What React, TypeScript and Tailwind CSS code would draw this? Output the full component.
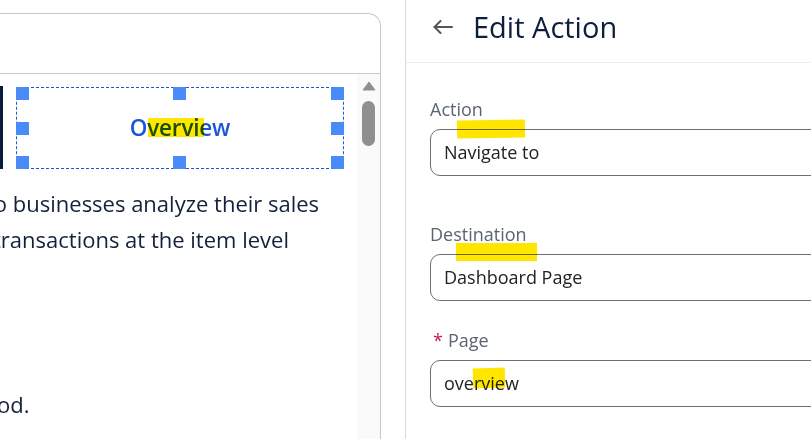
import React from "react";

const font = { fontFamily: '"Open Sans", "Noto Sans", sans-serif' };

const Handle = ({ className }: { className: string }) => (
  <span className={`absolute w-[13px] h-[13px] bg-[#4a8cf7] ${className}`} />
);

const Field = ({
  label,
  value,
  required,
  className,
}: {
  label: string;
  value: string;
  required?: boolean;
  className?: string;
}) => (
  <div className={className}>
    <div className="h-[24px] leading-[24px] text-[18px] text-[#5b6472] flex items-center">
      {required && <span className="text-[#c2185b] mr-[5px] ml-[3px] text-[18px]">*</span>}
      {label}
    </div>
    <div className="mt-[8px] w-[420px] h-[47px] border border-[#707070] rounded-[10px] flex items-center pl-[13px] text-[18px] text-[#222]">
      {value}
    </div>
  </div>
);

const App = () => {
  return (
    <div className="w-[811px] h-[439px] bg-white flex overflow-hidden relative" style={font}>
      {/* left canvas card */}
      <div className="w-[381px] shrink-0 pt-[13px]">
        <div className="h-full border-t border-r border-[#c8c8c8] rounded-tr-[13px] flex flex-col">
          <div className="h-[60px] border-b border-[#c8c8c8]" />
          <div className="flex-1 flex min-h-0">
            <div className="flex-1 overflow-hidden pt-[12px] text-[#14213d]">
              <div className="flex items-center">
                <div className="w-[3px] h-[83px] bg-[#0a1a3a]" />
                <div className="ml-[13px] w-[328px] h-[82px] border border-dashed border-[#1a56db] relative flex items-center justify-center">
                  <Handle className="left-[-1px] top-[-1px]" />
                  <Handle className="left-[156px] top-[-1px]" />
                  <Handle className="right-[-1px] top-[-1px]" />
                  <Handle className="left-[-1px] top-[34px]" />
                  <Handle className="right-[-1px] top-[34px]" />
                  <Handle className="left-[-1px] bottom-[-1px]" />
                  <Handle className="left-[156px] bottom-[-1px]" />
                  <Handle className="right-[-1px] bottom-[-1px]" />
                  <span className="text-[22.5px] font-semibold text-[#1a56db] tracking-[-0.2px]">Overview</span>
                  <span className="absolute left-[131px] top-[30px] w-[56px] h-[19px] bg-[#ffe600] mix-blend-multiply" />
                </div>
              </div>
              <div className="mt-[16px] text-[22px] leading-[36px] whitespace-nowrap">
                <div className="ml-[-14px]">to businesses analyze their sales</div>
                <div className="ml-[-7px]">transactions at the item level</div>
                <div className="mt-[129px] ml-[-3px]">od.</div>
              </div>
            </div>
            <div className="w-[23px] bg-[#fafafa] flex flex-col items-center pt-[7px]">
              <svg width="14" height="10" viewBox="0 0 14 10">
                <path d="M7 1 L13 9 L1 9 Z" fill="#8f8f8f" stroke="#8f8f8f" strokeLinejoin="round" />
              </svg>
              <div className="mt-[10px] w-[13px] h-[45px] rounded-full bg-[#8f8f8f]" />
            </div>
          </div>
        </div>
      </div>

      <div className="w-[24px] shrink-0" />

      {/* right panel */}
      <div className="flex-1 border-l border-[#d9d9d9] flex flex-col">
        <div className="h-[63px] border-b border-[#ececec] flex items-center pl-[27px] pb-[9px]">
          <svg width="20" height="14" viewBox="0 0 20 14" fill="none" stroke="#555" strokeWidth="2" strokeLinecap="round" strokeLinejoin="round">
            <path d="M19 7H1.5" />
            <path d="M7.5 1L1.5 7l6 6" />
          </svg>
          <span className="ml-[20px] text-[29px] text-[#0d1f3c]">Edit Action</span>
        </div>
        <div className="pl-[24px] pt-[34px] relative">
          <Field label="Action" value="Navigate to" />
          <Field label="Destination" value="Dashboard Page" className="mt-[46px]" />
          <Field label="Page" value="overview" required className="mt-[27px]" />
          <span className="absolute left-[51px] top-[57px] w-[68px] h-[18px] bg-[#ffe600] mix-blend-multiply -rotate-1" />
          <span className="absolute left-[50px] top-[180px] w-[81px] h-[18px] bg-[#ffe600] mix-blend-multiply" />
          <span className="absolute left-[67px] top-[305px] w-[32px] h-[20px] bg-[#ffe600] mix-blend-multiply -rotate-2" />
        </div>
      </div>
    </div>
  );
};

export default App;
